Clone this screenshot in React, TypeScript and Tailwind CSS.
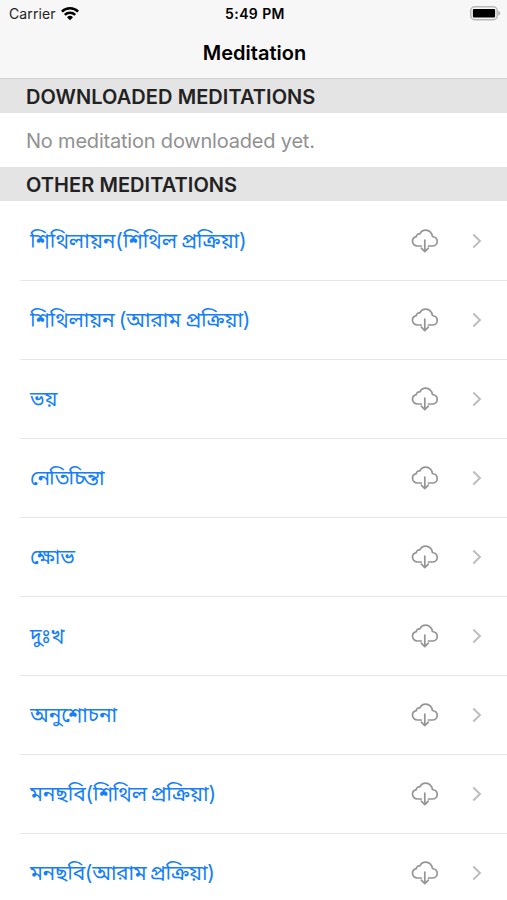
interface Meditation {
  title: string;
  spacing: string;
}

const meditations: Meditation[] = [
  { title: 'শিথিলায়ন(শিথিল প্রক্রিয়া)', spacing: '[word-spacing:-2px] tracking-[-0.08px]' },
  { title: 'শিথিলায়ন (আরাম প্রক্রিয়া)', spacing: '[word-spacing:-1px] tracking-[-0.3px]' },
  { title: 'ভয়', spacing: 'tracking-[-0.4px]' },
  { title: 'নেতিচিন্তা', spacing: 'tracking-[-1.1px]' },
  { title: 'ক্ষোভ', spacing: '' },
  { title: 'দুঃখ', spacing: 'tracking-[-0.2px]' },
  { title: 'অনুশোচনা', spacing: 'tracking-[-0.1px]' },
  { title: 'মনছবি(শিথিল প্রক্রিয়া)', spacing: '[word-spacing:-2px] tracking-[-0.2px]' },
  { title: 'মনছবি(আরাম প্রক্রিয়া)', spacing: '[word-spacing:-2px] tracking-[-0.38px]' },
];

function WifiIcon() {
  return (
    <svg width="18" height="14" viewBox="0 0 18 14" fill="none" stroke="#000" strokeWidth="2.5">
      <path d="M0.9 4.7a11.5 11.5 0 0 1 16.2 0" />
      <path d="M3.8 7.8a7.4 7.4 0 0 1 10.4 0" />
      <path d="M9 13.200 6 10.200a4.3 4.3 0 0 1 6 0z" fill="#000" stroke="none" />
    </svg>
  );
}

function BatteryIcon() {
  return (
    <svg width="31" height="15" viewBox="0 0 31 15">
      <rect x="0.75" y="0.75" width="26.5" height="13" rx="4" fill="none" stroke="#b8b8b8" strokeWidth="1.5" />
      <rect x="2.9" y="2.9" width="22.2" height="8.7" rx="1" fill="#000" />
      <path d="M28.200 5v4.600c1.300-.3 2.100-1.200 2.100-2.300S29.500 5.300 28.200 5z" fill="#b8b8b8" />
    </svg>
  );
}

function CloudDownloadIcon() {
  return (
    <svg width="28" height="24" viewBox="0 0 28 24" fill="none" stroke="#949494" strokeWidth="1.7" strokeLinecap="round" strokeLinejoin="round">
      <path d="M10.300 17H6.500C3.600 17 1.500 15 1.500 12.200c0-2.400 1.500-4.200 3.800-4.600C5.500 5.600 7 4.600 8.900 4.900 10.100 2.500 12.200 1.200 14.700 1.200c3.800 0 6.500 2.800 6.700 6.300 2.900.4 4.800 2.200 4.800 4.900 0 2.700-2 4.600-4.800 4.600H17.400" />
      <path d="M13.800 11v11.400M10.300 19.200l3.500 3.400 3.500-3.400" />
    </svg>
  );
}

function Chevron() {
  return (
    <svg width="10" height="16" viewBox="0 0 10 16" fill="none" stroke="#bcbcbe" strokeWidth="1.9">
      <path d="M1.300 1.500 8 8l-6.700 6.500" />
    </svg>
  );
}

function SectionHeader({ title }: { title: string }) {
  return (
    <h2 className="flex h-[34px] items-center bg-[#e4e4e4] pt-[2px] pl-[26px] text-[20px] font-semibold tracking-[0.06px] text-[#222]">
      {title}
    </h2>
  );
}

function MeditationRow({ title, spacing }: Meditation) {
  return (
    <li className="ml-[20px] flex h-[79px] items-center border-t border-[#e6e6e6] pr-[25px] pl-[10px] first:border-transparent">
      <span className={`flex-1 whitespace-nowrap text-[21px] text-[#147efb] ${spacing}`}>{title}</span>
      <CloudDownloadIcon />
      <span className="ml-[33px]">
        <Chevron />
      </span>
    </li>
  );
}

export default function App() {
  return (
    <div className="h-[900px] overflow-hidden bg-white font-['Inter','Noto_Sans_Bengali',sans-serif]">
      <header className="flex h-[79px] flex-col border-b border-[#cfcfcf] bg-[#f7f7f7]">
        <div className="grid h-[27px] grid-cols-3 items-center pr-[6px] pl-[9px] text-[14px]">
          <div className="flex items-center gap-[5px] tracking-[0.1px] text-[#222]">
            Carrier
            <WifiIcon />
          </div>
          <span className="text-center font-semibold tracking-[0.4px]">5:49 PM</span>
          <div className="flex justify-end">
            <BatteryIcon />
          </div>
        </div>
        <h1 className="flex flex-1 items-center justify-center pl-[2px] text-[20px] font-semibold">Meditation</h1>
      </header>
      <main>
        <SectionHeader title="DOWNLOADED MEDITATIONS" />
        <p className="flex h-[54px] items-center pt-[2px] pl-[26px] text-[20px] tracking-[-0.2px] text-[#919191]">
          No meditation downloaded yet.
        </p>
        <SectionHeader title="OTHER MEDITATIONS" />
        <ul>
          {meditations.map((item) => (
            <MeditationRow key={item.title} {...item} />
          ))}
        </ul>
      </main>
    </div>
  );
}
